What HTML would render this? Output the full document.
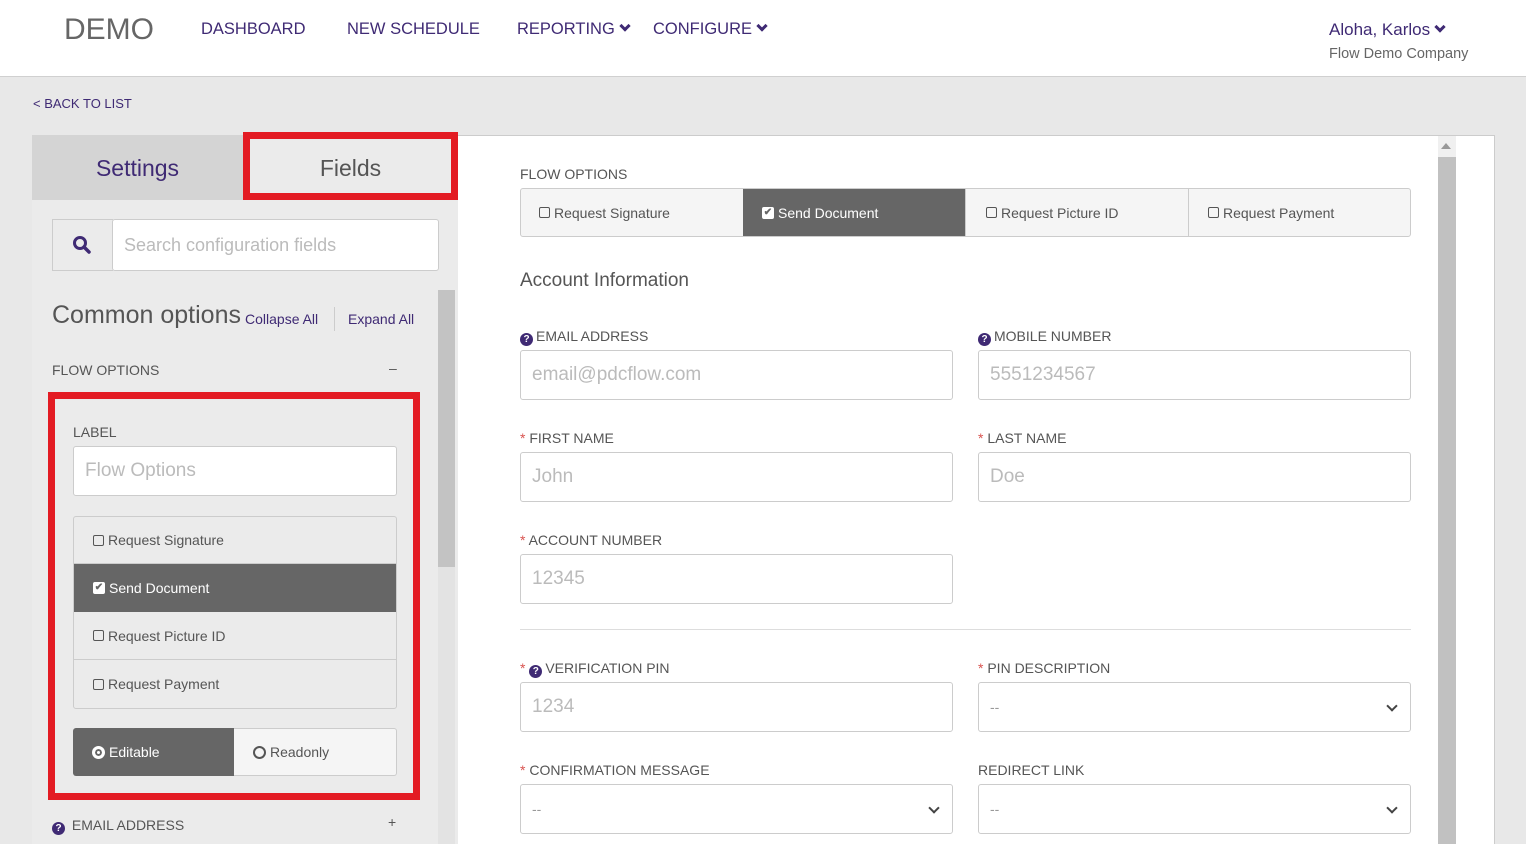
<!DOCTYPE html>
<html><head><meta charset="utf-8"><style>
*{box-sizing:border-box;margin:0;padding:0}
body{width:1526px;height:844px;overflow:hidden;background:#e8e8e8;font-family:"Liberation Sans",sans-serif;position:relative;color:#555}
.a{position:absolute;white-space:nowrap}
.p{color:#3f2a74}
.hdr{left:0;top:0;width:1526px;height:77px;background:#fff;border-bottom:1px solid #d0d0d0}
.nav{font-size:16.5px;top:20px}
.chev{display:inline-block;width:8px;height:8px;border-right:3px solid #3f2a74;border-bottom:3px solid #3f2a74;transform:rotate(45deg);margin-left:6px;position:relative;top:-4px}
.inp{background:#fff;border:1px solid #ccc;border-radius:3px;color:#bbb;font-size:19px;padding-left:11px;display:flex;align-items:center}
.lbl{font-size:14px;color:#555}
.req{color:#d9534f}
.q{display:inline-block;width:13px;height:13px;border-radius:50%;background:#3f2a74;color:#fff;font-size:10px;font-weight:bold;text-align:center;line-height:13px;margin-right:3px;vertical-align:-1px}
.cb{display:inline-block;width:11px;height:11px;border:1px solid #555;border-radius:2px;margin-right:4px;vertical-align:-1px}
.cbk{display:inline-block;width:12px;height:12px;background:#fff;border-radius:2px;margin-right:4px;vertical-align:-1px;color:#666;font-size:10px;line-height:12px;text-align:center;font-weight:bold}
.row{position:absolute;display:flex;align-items:center;font-size:14px;color:#555}
.dk{background:#666;color:#fff}
.sel::after{content:"";position:absolute;right:14px;top:19px;width:6px;height:6px;border-right:2px solid #444;border-bottom:2px solid #444;transform:rotate(45deg)}
.sel{color:#999;font-size:14px}
</style></head><body>
<div class="a hdr"></div>
<div class="a" style="left:64px;top:13px;font-size:30px;color:#666">DEMO</div>
<div class="a nav p" style="left:201px">DASHBOARD</div>
<div class="a nav p" style="left:347px">NEW SCHEDULE</div>
<div class="a nav p" style="left:517px">REPORTING<span class="chev"></span></div>
<div class="a nav p" style="left:653px">CONFIGURE<span class="chev"></span></div>
<div class="a p" style="left:1329px;top:20px;font-size:17px">Aloha, Karlos<span class="chev"></span></div>
<div class="a" style="left:1329px;top:46px;font-size:14.5px;color:#666">Flow Demo Company</div>
<div class="a p" style="left:33px;top:96px;font-size:13px">&lt; BACK TO LIST</div>

<div class="a" style="left:32px;top:135px;width:426px;height:709px;background:#ebebeb"></div>
<div class="a" style="left:32px;top:135px;width:211px;height:65px;background:#d4d4d4;color:#3f2a74;font-size:23px;text-align:center;line-height:66px">Settings</div>
<div class="a" style="left:243px;top:132px;width:215px;height:68px;border:7px solid #e31b23;color:#555;font-size:23px;text-align:center;line-height:58px">Fields</div>
<div class="a" style="left:52px;top:219px;width:61px;height:52px;border:1px solid #ccc;border-right:none;background:#ebebeb"></div>
<svg class="a" style="left:72px;top:235px" width="20" height="20" viewBox="0 0 20 20"><circle cx="8" cy="8" r="5.5" fill="none" stroke="#3f2a74" stroke-width="3"/><line x1="12" y1="12" x2="17" y2="17" stroke="#3f2a74" stroke-width="3.5" stroke-linecap="round"/></svg>
<div class="a inp" style="left:112px;top:219px;width:327px;height:52px;font-size:18px">Search configuration fields</div>
<div class="a" style="left:438px;top:290px;width:17px;height:554px;background:#e3e3e3"></div>
<div class="a" style="left:438px;top:290px;width:17px;height:277px;background:#c3c3c3"></div>
<div class="a" style="left:52px;top:301px;font-size:25px;color:#555">Common options</div>
<div class="a p" style="left:245px;top:311px;font-size:14px">Collapse All</div>
<div class="a" style="left:334px;top:307px;width:1px;height:24px;background:#ccc"></div>
<div class="a p" style="left:348px;top:311px;font-size:14px">Expand All</div>
<div class="a" style="left:52px;top:362px;font-size:14px">FLOW OPTIONS</div>
<div class="a" style="left:389px;top:360px;font-size:14px">–</div>
<div class="a" style="left:48px;top:392px;width:372px;height:408px;border:7px solid #e31b23"></div>
<div class="a lbl" style="left:73px;top:424px">LABEL</div>
<div class="a inp" style="left:73px;top:446px;width:324px;height:50px">Flow Options</div>
<div class="a" style="left:73px;top:516px;width:324px;height:193px;border:1px solid #ccc;border-radius:3px"></div>
<div class="row" style="left:74px;top:517px;width:322px;height:47px;padding-left:19px;border-bottom:1px solid #ccc"><span class="cb"></span>Request Signature</div>
<div class="row dk" style="left:74px;top:564px;width:322px;height:48px;padding-left:19px"><span class="cbk">✔</span>Send Document</div>
<div class="row" style="left:74px;top:612px;width:322px;height:48px;padding-left:19px;border-bottom:1px solid #ccc"><span class="cb"></span>Request Picture ID</div>
<div class="row" style="left:74px;top:660px;width:322px;height:48px;padding-left:19px"><span class="cb"></span>Request Payment</div>
<div class="row dk" style="left:73px;top:728px;width:161px;height:48px;padding-left:19px;border-radius:3px 0 0 3px"><span style="display:inline-block;width:13px;height:13px;border:3px solid #fff;border-radius:50%;margin-right:4px;box-shadow:inset 0 0 0 2px #666;background:#fff"></span>Editable</div>
<div class="row" style="left:234px;top:728px;width:163px;height:48px;padding-left:19px;background:#f5f5f5;border:1px solid #ccc;border-left:none;border-radius:0 3px 3px 0"><span style="display:inline-block;width:13px;height:13px;border:2px solid #555;border-radius:50%;margin-right:4px"></span>Readonly</div>
<div class="a" style="left:52px;top:817px;font-size:14px"><span class="q">?</span> EMAIL ADDRESS</div>
<div class="a" style="left:388px;top:814px;font-size:14px">+</div>

<div class="a" style="left:458px;top:135px;width:1037px;height:709px;background:#fff;border:1px solid #ccc;border-left:none;border-bottom:none"></div>
<div class="a" style="left:1438px;top:136px;width:18px;height:708px;background:#f0f0f0"></div>
<div class="a" style="left:1441px;top:143px;width:0;height:0;border-left:5px solid transparent;border-right:5px solid transparent;border-bottom:6px solid #999"></div>
<div class="a" style="left:1438px;top:157px;width:18px;height:687px;background:#c1c1c1"></div>

<div class="a" style="left:520px;top:166px;font-size:14px">FLOW OPTIONS</div>
<div class="a" style="left:520px;top:188px;width:891px;height:49px;border:1px solid #ccc;border-radius:3px;background:#f5f5f5"></div>
<div class="row" style="left:521px;top:189px;width:222px;height:47px;padding-left:18px"><span class="cb"></span>Request Signature</div>
<div class="row dk" style="left:743px;top:189px;width:222px;height:47px;padding-left:19px"><span class="cbk">✔</span>Send Document</div>
<div class="row" style="left:965px;top:189px;width:223px;height:47px;padding-left:20px;border-left:1px solid #ccc"><span class="cb"></span>Request Picture ID</div>
<div class="row" style="left:1188px;top:189px;width:222px;height:47px;padding-left:19px;border-left:1px solid #ccc"><span class="cb"></span>Request Payment</div>
<div class="a" style="left:520px;top:270px;font-size:19px">Account Information</div>

<div class="a lbl" style="left:520px;top:328px"><span class="q">?</span>EMAIL ADDRESS</div>
<div class="a lbl" style="left:978px;top:328px"><span class="q">?</span>MOBILE NUMBER</div>
<div class="a inp" style="left:520px;top:350px;width:433px;height:50px">email@pdcflow.com</div>
<div class="a inp" style="left:978px;top:350px;width:433px;height:50px">5551234567</div>

<div class="a lbl" style="left:520px;top:430px"><span class="req">*</span> FIRST NAME</div>
<div class="a lbl" style="left:978px;top:430px"><span class="req">*</span> LAST NAME</div>
<div class="a inp" style="left:520px;top:452px;width:433px;height:50px">John</div>
<div class="a inp" style="left:978px;top:452px;width:433px;height:50px">Doe</div>

<div class="a lbl" style="left:520px;top:532px"><span class="req">*</span> ACCOUNT NUMBER</div>
<div class="a inp" style="left:520px;top:554px;width:433px;height:50px">12345</div>
<div class="a" style="left:520px;top:629px;width:891px;height:1px;background:#ddd"></div>

<div class="a lbl" style="left:520px;top:660px"><span class="req">*</span> <span class="q">?</span>VERIFICATION PIN</div>
<div class="a lbl" style="left:978px;top:660px"><span class="req">*</span> PIN DESCRIPTION</div>
<div class="a inp" style="left:520px;top:682px;width:433px;height:50px">1234</div>
<div class="a inp sel" style="left:978px;top:682px;width:433px;height:50px">--</div>

<div class="a lbl" style="left:520px;top:762px"><span class="req">*</span> CONFIRMATION MESSAGE</div>
<div class="a lbl" style="left:978px;top:762px">REDIRECT LINK</div>
<div class="a inp sel" style="left:520px;top:784px;width:433px;height:50px">--</div>
<div class="a inp sel" style="left:978px;top:784px;width:433px;height:50px">--</div>
</body></html>
